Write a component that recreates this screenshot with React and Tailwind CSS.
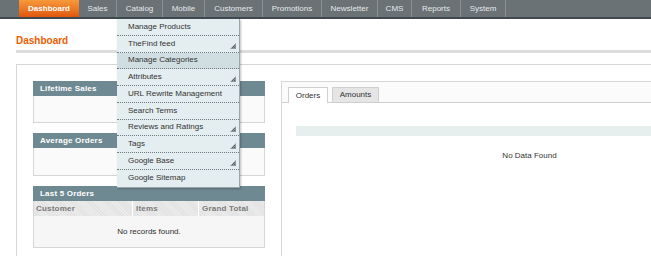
import React from "react";

const navItems = [
  { label: "Dashboard", w: "w-[60px]", active: true },
  { label: "Sales", w: "w-[38px]" },
  { label: "Catalog", w: "w-[46px]" },
  { label: "Mobile", w: "w-[42px]" },
  { label: "Customers", w: "w-[58px]" },
  { label: "Promotions", w: "w-[59px]" },
  { label: "Newsletter", w: "w-[56px]" },
  { label: "CMS", w: "w-[34px]" },
  { label: "Reports", w: "w-[49px]" },
  { label: "System", w: "w-[45px]" },
];

const catalogMenu = [
  { label: "Manage Products" },
  { label: "TheFind feed", sub: true },
  { label: "Manage Categories", hover: true },
  { label: "Attributes", sub: true },
  { label: "URL Rewrite Management" },
  { label: "Search Terms" },
  { label: "Reviews and Ratings", sub: true },
  { label: "Tags", sub: true },
  { label: "Google Base", sub: true },
  { label: "Google Sitemap" },
];

function SubArrow() {
  return (
    <svg width="6" height="6" viewBox="0 0 6 6" className="absolute right-[3px] bottom-[3px]">
      <path d="M6 0 L6 6 L0 6 Z" fill="#8a979b" />
      <path d="M5 2 L2 5 M5 4 L4 5" stroke="#4d5a5f" strokeWidth="0.8" />
    </svg>
  );
}

function BoxHead({ children }) {
  return (
    <div className="h-[15px] bg-[#6f8992] text-white font-bold text-[8px] leading-[15px] pl-[7px] tracking-[0.2px]">
      {children}
    </div>
  );
}

export default function App() {
  return (
    <div className="relative w-[651px] h-[256px] overflow-hidden bg-white font-['Liberation_Sans',Arial,sans-serif] text-[#2f2f2f]">
      {/* top navigation */}
      <nav className="h-[19px] bg-[#6a7276] border-b-2 border-[#3e4a50] flex pl-[19px]">
        {navItems.map((item) => (
          <div
            key={item.label}
            className={`${item.w} h-[17px] flex items-center justify-center text-[8px] ${
              item.active
                ? "bg-gradient-to-b from-[#f79a3a] to-[#e0560a] text-white font-bold"
                : "text-[#e6e9ea] border-r border-[#8a9296]"
            }`}
          >
            {item.label}
          </div>
        ))}
      </nav>

      {/* catalog dropdown */}
      <ul className="absolute left-[117px] top-[19px] w-[123px] bg-[#e4edef] border-r border-b border-[#9aa5a9] shadow-[1px_1px_2px_rgba(0,0,0,0.25)] z-10">
        {catalogMenu.map((m) => (
          <li
            key={m.label}
            className={`relative h-[16.75px] flex items-center pl-[11px] text-[8px] text-[#333] border-b border-dotted border-[#6e7b80] last:border-b-0 ${
              m.hover ? "bg-[#d1dee1]" : ""
            }`}
          >
            {m.label}
            {m.sub && <SubArrow />}
          </li>
        ))}
      </ul>

      <div className="w-[793px] pl-[16px]">
        <div className="h-[34px] flex items-end pb-[3px] border-b-[3px] border-[#dcdcdc]">
          <h3 className="text-[10px] font-bold text-[#eb5e00] leading-[12px]">Dashboard</h3>
        </div>

        <div className="mt-[11px] border-l border-t border-[#d6d6d6] pt-[16px] pl-[16px] flex gap-[16px] h-[200px]">
          {/* left column */}
          <div className="w-[232px] flex flex-col">
            <BoxHead>Lifetime Sales</BoxHead>
            <div className="h-[27px] bg-[#fafafa] border border-t-0 border-[#d6d6d6]"></div>

            <div className="mt-[10px]">
              <BoxHead>Average Orders</BoxHead>
              <div className="h-[28px] bg-[#fafafa] border border-t-0 border-[#d6d6d6]"></div>
            </div>

            <div className="mt-[10px]">
              <BoxHead>Last 5 Orders</BoxHead>
              <div className="border border-t-0 border-[#d6d6d6] bg-[#f6f6f6]">
                <div className="flex h-[15px] text-[8px] font-bold text-[#7a7a7a] tracking-[0.2px] bg-[repeating-linear-gradient(45deg,#e2e2e2_0px,#e2e2e2_1px,#ececec_1px,#ececec_2px)]">
                  <div className="w-[99px] pl-[2px] flex items-center border-r border-white">Customer</div>
                  <div className="w-[66px] pl-[3px] flex items-center border-r border-white">Items</div>
                  <div className="flex-1 pl-[3px] flex items-center">Grand Total</div>
                </div>
                <div className="h-[31px] flex items-center justify-center text-[8px] text-[#2f2f2f]">
                  No records found.
                </div>
              </div>
            </div>
          </div>

          {/* right column */}
          <div className="w-[496px] border-l border-t border-[#d6d6d6]">
            <div className="flex items-end h-[21px] pl-[6px] gap-[4px] border-b border-[#cfcfcf] bg-[#fbfbfb]">
              <div className="h-[16px] w-[40px] bg-white border border-b-0 border-[#cfcfcf] -mb-px flex items-center justify-center text-[8px] text-[#333]">
                Orders
              </div>
              <div className="h-[15px] w-[47px] bg-[#e5e5e5] border border-b-0 border-[#cfcfcf] flex items-center justify-center text-[8px] text-[#333]">
                Amounts
              </div>
            </div>
            <div className="px-[14px] pt-[23px]">
              <div className="h-[10px] bg-[#e6efed]"></div>
              <div className="mt-[14px] text-center text-[8px] text-[#333]">No Data Found</div>
            </div>
          </div>
        </div>
      </div>
    </div>
  );
}
